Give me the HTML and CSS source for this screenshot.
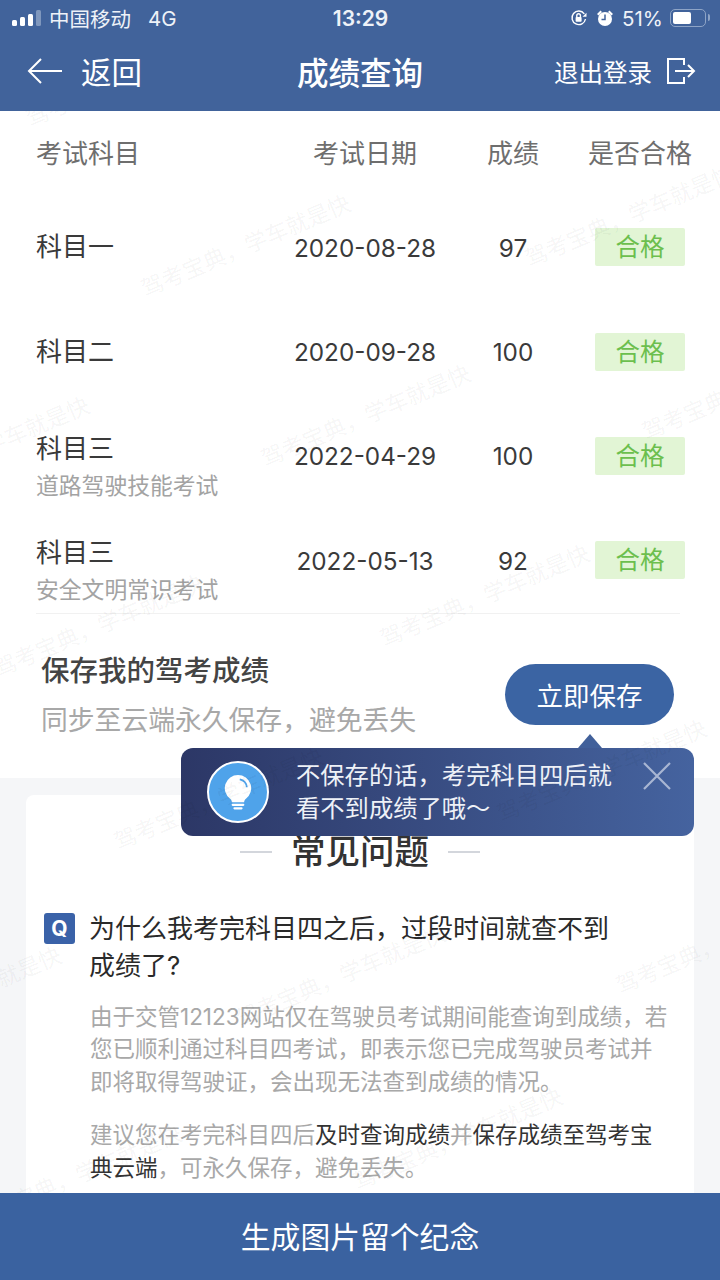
FILE: index.html
```html
<!DOCTYPE html>
<html lang="zh-CN">
<head>
    <meta charset="UTF-8">
    <meta name="viewport" content="width=device-width, initial-scale=1.0">
    <title>成绩查询</title>
    <link rel="stylesheet" href="styles.css">
</head>
<body>
<div class="page">
    <header class="top">
        <div class="status">
            <div class="status-left">
                <span class="signal"><i></i><i></i><i></i><i class="off"></i></span>
                <span>中国移动</span>
                <span class="net">4G</span>
            </div>
            <div class="time">13:29</div>
            <div class="status-right">
                <svg width="18" height="18" viewBox="0 0 18 18" fill="none" stroke="#fff" stroke-width="1.4"><path d="M15.500 10a6.800 6.800 0 1 1-1.200-5.200"/><path d="M16.500 3.800v4h-4z" fill="#fff" stroke="none"/><rect x="5.600" y="8" width="6" height="4.800" rx=".8" fill="#fff" stroke="none"/><path d="M6.800 8V6.600a1.800 1.800 0 0 1 3.600 0V8"/></svg>
                <svg width="18" height="18" viewBox="0 0 18 18"><path d="M1 5 4.500 1.400 6 3 2.600 6.600zM17 5 13.500 1.400 12 3l3.400 3.600z" fill="#fff"/><circle cx="9" cy="10" r="7" fill="#fff"/><path d="M9 5.500V10.500H5.500" fill="none" stroke="#41639b" stroke-width="1.500"/></svg>
                <span>51%</span>
                <span class="battery"><i></i></span>
            </div>
        </div>
        <nav class="nav">
            <div class="back">
                <svg width="36" height="28" viewBox="0 0 36 28" fill="none" stroke="#fff" stroke-width="2"><path d="M35 14H2M14 2 2 14l12 12"/></svg>
                <span>返回</span>
            </div>
            <h1 class="nav-title">成绩查询</h1>
            <div class="logout">
                <span>退出登录</span>
                <svg width="30" height="28" viewBox="0 0 30 28" fill="none" stroke="#fff" stroke-width="2"><path d="M18 8V2H2v24h16v-6M9 14h19M22 8l6 6-6 6"/></svg>
            </div>
        </nav>
    </header>

    <main class="content">
        <section class="scores">
            <div class="row row-head">
                <div>考试科目</div>
                <div class="cell">考试日期</div>
                <div class="cell">成绩</div>
                <div class="cell">是否合格</div>
            </div>
            <div class="row">
                <div>科目一</div>
                <div class="cell num">2020-08-28</div>
                <div class="cell num">97</div>
                <div class="cell"><span class="pass">合格</span></div>
            </div>
            <div class="row">
                <div>科目二</div>
                <div class="cell num">2020-09-28</div>
                <div class="cell num">100</div>
                <div class="cell"><span class="pass">合格</span></div>
            </div>
            <div class="row">
                <div class="subject-two">科目三<small>道路驾驶技能考试</small></div>
                <div class="cell num">2022-04-29</div>
                <div class="cell num">100</div>
                <div class="cell"><span class="pass">合格</span></div>
            </div>
            <div class="row">
                <div class="subject-two">科目三<small>安全文明常识考试</small></div>
                <div class="cell num">2022-05-13</div>
                <div class="cell num">92</div>
                <div class="cell"><span class="pass">合格</span></div>
            </div>
        </section>

        <section class="save">
            <div>
                <h2 class="save-title">保存我的驾考成绩</h2>
                <p class="save-sub">同步至云端永久保存，避免丢失</p>
            </div>
            <button class="save-btn">立即保存</button>
        </section>

        <section class="faq-wrap">
            <div class="faq">
                <h2 class="faq-title">常见问题</h2>
                <div class="question">
                    <span class="q-badge">Q</span>
                    <p>为什么我考完科目四之后，过段时间就查不到<br>成绩了?</p>
                </div>
                <p class="answer">由于交管12123网站仅在驾驶员考试期间能查询到成绩，若<br>您已顺利通过科目四考试，即表示您已完成驾驶员考试并<br>即将取得驾驶证，会出现无法查到成绩的情况。</p>
                <p class="answer answer-next">建议您在考完科目四后<b>及时查询成绩</b>并<b>保存成绩至驾考宝<br>典云端</b>，可永久保存，避免丢失。</p>
            </div>
        </section>

        <div class="tip">
            <span class="tip-icon">
                <svg width="30" height="37" viewBox="0 0 34 42" fill="none"><path d="M17 1a15 15 0 0 0-9 27c1.500 1.200 2 2.500 2 4h14c0-1.500.5-2.800 2-4a15 15 0 0 0-9-27z" fill="#fff"/><path d="M19 6a10 10 0 0 1 8 9" stroke="#4fa3ea" stroke-width="2"/><path d="M11 35h12M13 39h8" stroke="#fff" stroke-width="2.500" stroke-linecap="round"/></svg>
            </span>
            <p class="tip-text">不保存的话，考完科目四后就<br>看不到成绩了哦～</p>
            <svg class="tip-close" width="28" height="28" viewBox="0 0 28 28" stroke="#a9b6d3" stroke-width="2.200"><path d="M1 1l26 26M27 1 1 27"/></svg>
        </div>

        <div class="marks">
            <span style="left:27px;top:-6px">驾考宝典，学车就是快</span>
            <span style="left:142px;top:164px">驾考宝典，学车就是快</span>
            <span style="left:526px;top:134px">驾考宝典，学车就是快</span>
            <span style="left:-119px;top:366px">驾考宝典，学车就是快</span>
            <span style="left:262px;top:334px">驾考宝典，学车就是快</span>
            <span style="left:643px;top:307px">驾考宝典，学车就是快</span>
            <span style="left:-5px;top:544px">驾考宝典，学车就是快</span>
            <span style="left:381px;top:514px">驾考宝典，学车就是快</span>
            <span style="left:115px;top:717px">驾考宝典，学车就是快</span>
            <span style="left:498px;top:689px">驾考宝典，学车就是快</span>
            <span style="left:-147px;top:916px">驾考宝典，学车就是快</span>
            <span style="left:237px;top:894px">驾考宝典，学车就是快</span>
            <span style="left:617px;top:861px">驾考宝典，学车就是快</span>
            <span style="left:-27px;top:1094px">驾考宝典，学车就是快</span>
            <span style="left:354px;top:1057px">驾考宝典，学车就是快</span>
        </div>
    </main>

    <footer class="bottom">生成图片留个纪念</footer>
</div>
</body>
</html>
```

FILE: styles.css
```css
* {
    box-sizing: border-box;
}

body {
    margin: 0;
    font-family: Inter, "Noto Sans CJK SC", sans-serif;
    color: #333;
    background: #fff;
}

p, h1, h2 {
    margin: 0;
    font-weight: normal;
}

.page {
    width: 720px;
    height: 1280px;
    display: flex;
    flex-direction: column;
    overflow: hidden;
}

.top {
    height: 111px;
    background: #41639b;
    color: #fff;
    flex: none;
    position: relative;
    z-index: 2;
}

.status {
    height: 36px;
    padding: 0 11px 0 12px;
    display: grid;
    grid-template-columns: 1fr auto 1fr;
    align-items: center;
    font-size: 20.500px;
    color: #eef2f8;
}

.status-left, .status-right {
    display: flex;
    align-items: center;
}

.status-left span + span {
    margin-left: 8px;
}

.status-left .net {
    margin-left: 17px;
}

.signal {
    display: flex;
    align-items: flex-end;
    gap: 3px;
    height: 16px;
}

.signal i {
    width: 5px;
    background: #fff;
    border-radius: 1.500px;
}

.signal i:nth-child(1) { height: 6px; }
.signal i:nth-child(2) { height: 9px; }
.signal i:nth-child(3) { height: 12px; }
.signal i:nth-child(4) { height: 16px; }
.signal i.off { background: #7f97bd; }

.time {
    font-size: 21px;
    font-weight: 600;
}

.status-right {
    justify-content: flex-end;
    gap: 8px;
    font-size: 20.500px;
}

.battery {
    width: 36px;
    height: 18px;
    margin-left: -1px;
    border: 1.500px solid #8ea4c6;
    border-radius: 5px;
    padding: 2px;
    position: relative;
    margin-right: 3px;
}

.battery::after {
    content: "";
    position: absolute;
    right: -5px;
    top: 4px;
    width: 2px;
    height: 7px;
    background: #8ea4c6;
    border-radius: 0 2px 2px 0;
}

.battery i {
    display: block;
    width: 18px;
    height: 100%;
    background: #fff;
    border-radius: 2px;
}

.nav {
    height: 75px;
    display: grid;
    grid-template-columns: 1fr auto 1fr;
    align-items: center;
    padding: 0 24px 5px;
}

.back {
    display: flex;
    align-items: center;
    gap: 18px;
    margin-left: 3px;
    font-size: 30.500px;
}

.nav-title {
    font-size: 31.500px;
    font-weight: 500;
}

.logout {
    display: flex;
    justify-content: flex-end;
    align-items: center;
    gap: 14px;
    font-size: 24.500px;
}

.content {
    flex: 1;
    min-height: 0;
    position: relative;
    overflow: hidden;
    background: #f5f6f8;
}

.scores {
    background: #fff;
    height: 502px;
    padding-left: 36px;
}

.row {
    display: grid;
    grid-template-columns: 249px 160px 136px 118px;
    height: 104.400px;
    align-items: center;
    font-size: 26px;
    line-height: 36px;
    color: #3a3a3a;
}

.row-head {
    height: 84px;
    padding-top: 1px;
    color: #6e6e6e;
}

.cell {
    text-align: center;
}

.num {
    font-size: 24.300px;
    padding-top: 1px;
}

.subject-two {
    align-self: start;
    padding-top: 27px;
}

.subject-two small {
    display: block;
    font-size: 22.800px;
    line-height: 37px;
    color: #a3a3a3;
}

.pass {
    display: block;
    width: 90px;
    height: 38px;
    margin-left: 14px;
    border-radius: 2px;
    line-height: 38px;
    background: #e2f5d5;
    color: #6cbf4e;
    font-size: 24.500px;
}

.save {
    height: 165px;
    background: linear-gradient(#f1f1f1, #f1f1f1) 36px 0 / 644px 1px no-repeat #fff;
    display: flex;
    justify-content: space-between;
    padding: 36px 46px 0 41px;
}

.save-title {
    font-size: 28.500px;
    font-weight: 500;
    line-height: 44px;
    color: #444;
}

.save-sub {
    font-size: 26.800px;
    line-height: 44px;
    margin-top: 5px;
    color: #a8a8a8;
}

.save-btn {
    width: 169px;
    height: 61px;
    margin-top: 15px;
    border: none;
    border-radius: 31px;
    background: #3b64a3;
    color: #fff;
    font-family: inherit;
    font-size: 26.500px;
}

.faq-wrap {
    padding: 17px 26px 0;
}

.faq {
    background: #fff;
    border-radius: 8px 8px 0 0;
    padding: 35px 18px 0;
    height: 420px;
}

.faq-title {
    display: flex;
    justify-content: center;
    align-items: center;
    gap: 19px;
    font-size: 34.500px;
    font-weight: 500;
    line-height: 44px;
    color: #333;
}

.faq-title::before, .faq-title::after {
    content: "";
    width: 32px;
    height: 2px;
    background: #d3d6dc;
}

.question {
    display: flex;
    gap: 14px;
    margin-top: 36px;
    font-size: 26px;
    font-weight: 500;
    line-height: 37px;
    color: #2a2a2a;
}

.q-badge {
    flex: none;
    width: 31px;
    height: 31px;
    margin-top: 3px;
    border-radius: 3px;
    background: #3a62a8;
    color: #fff;
    font-size: 21px;
    font-weight: bold;
    line-height: 31px;
    text-align: center;
}

.answer {
    margin: 17px 0 0 46px;
    font-size: 22.500px;
    line-height: 32.400px;
    color: #a8a8a8;
    white-space: nowrap;
}

.answer-next {
    margin-top: 21px;
}

.answer b {
    font-weight: normal;
    color: #333;
}

.tip {
    position: absolute;
    left: 181px;
    top: 637px;
    width: 513px;
    height: 88px;
    border-radius: 12px;
    background: linear-gradient(90deg, #2c3766, #45639f);
    display: flex;
    align-items: center;
    padding-left: 26px;
    color: #eef1f7;
}

.tip::before {
    content: "";
    position: absolute;
    left: 397px;
    top: -14px;
    border: 12px solid transparent;
    border-top: 0;
    border-bottom: 14px solid #41609a;
}

.tip-icon {
    flex: none;
    width: 62px;
    height: 62px;
    border-radius: 50%;
    border: 2px solid #fff;
    background: #4fa3ea;
    display: flex;
    align-items: center;
    justify-content: center;
}

.tip-text {
    margin-left: 27px;
    font-size: 24.300px;
    line-height: 33px;
    flex: 1;
}

.tip-close {
    position: absolute;
    left: 462px;
    top: 14px;
}

.marks {
    position: absolute;
    inset: 0;
    pointer-events: none;
}

.marks span {
    position: absolute;
    font-size: 22.500px;
    line-height: 30px;
    white-space: nowrap;
    color: rgba(0, 0, 0, 0.05);
    transform: rotate(-23deg);
    transform-origin: left center;
}

.bottom {
    height: 87px;
    flex: none;
    padding-bottom: 3px;
    background: #3a62a0;
    color: #fff;
    font-size: 29.800px;
    display: flex;
    align-items: center;
    justify-content: center;
    position: relative;
    z-index: 2;
}
```
